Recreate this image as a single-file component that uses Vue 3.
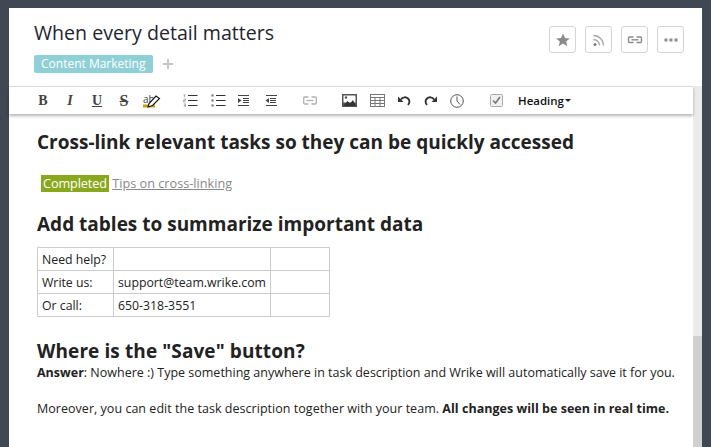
<script setup>
const rows = [
  ["Need help?", "", ""],
  ["Write us:", "support@team.wrike.com", ""],
  ["Or call:", "650-318-3551", ""],
];
</script>

<template>
  <div class="page">
    <div class="panel">
      <!-- title and action buttons -->
      <header class="head">
        <div class="head__left">
          <h1 class="title">When every detail matters</h1>
          <div class="tags">
            <span class="tag">Content Marketing</span>
            <svg class="plus" width="12" height="12" viewBox="0 0 12 12"><path d="M5 1h2v4h4v2H7v4H5V7H1V5h4z" fill="#c4c4c4" /></svg>
          </div>
        </div>
        <div class="actions">
          <button class="action">
            <svg width="16" height="16" viewBox="0 0 16 16"><path d="M8 1.500l2 4.400 4.800.5-3.600 3.200 1 4.700L8 11.500l-4.200 2.800 1-4.700L1.200 6.400 6 5.900z" fill="#8c8c8c" /></svg>
          </button>
          <button class="action">
            <svg width="14" height="14" viewBox="0 0 14 14" fill="none" stroke="#a8a8a8" stroke-width="1.300"><circle cx="3" cy="11.500" r="1.600" fill="#808080" stroke="none" /><path d="M1.500 6.500a6 6 0 0 1 6 6" /><path d="M1.500 2.500a10 10 0 0 1 10 10" /></svg>
          </button>
          <button class="action">
            <svg width="16" height="10" viewBox="0 0 16 10" fill="none" stroke="#8c8c8c" stroke-width="1.400"><path d="M6.500 2H2.500a1 1 0 0 0-1 1v3.500a1 1 0 0 0 1 1h4" /><path d="M9.500 2h4a1 1 0 0 1 1 1v3.500a1 1 0 0 1-1 1h-4" /><path d="M4.500 4.800h7" /></svg>
          </button>
          <button class="action">
            <svg width="14" height="4" viewBox="0 0 14 4"><rect x="0.500" y="0.500" width="3" height="3" fill="#8c8c8c" /><rect x="5.500" y="0.500" width="3" height="3" fill="#8c8c8c" /><rect x="10.500" y="0.500" width="3" height="3" fill="#8c8c8c" /></svg>
          </button>
        </div>
      </header>

      <div class="body">
        <div class="main">
          <!-- editor toolbar -->
          <div class="toolbar">
            <div class="tools tools--format">
              <span class="tool tool--b">B</span>
              <span class="tool tool--i">I</span>
              <span class="tool tool--u">U</span>
              <span class="tool tool--s">S</span>
              <svg class="marker" width="18" height="15" viewBox="0 0 18 15">
                <text x="0" y="10" font-size="10" font-family="Open Sans, sans-serif" fill="#444">ab</text>
                <rect x="0" y="11.500" width="12" height="3" fill="#c8a010" />
                <path d="M5 14l1-3.500L13 3l3.500 2.500-7 7z" fill="#fff" stroke="#111" stroke-width="1.100" />
              </svg>
            </div>
            <div class="tools tools--lists">
              <svg width="15" height="13" viewBox="0 0 15 13"><path d="M0.500 1h2M1.500 1v2M0.500 5h2v1.500h-2V8h2M0.500 10h2v3h-2M1 11.500h1.500" fill="none" stroke="#999" stroke-width="0.800" /><path d="M5 1.500h9.500M5 6.500h9.500M5 11.500h9.500" stroke="#333" stroke-width="1" /></svg>
              <svg width="15" height="13" viewBox="0 0 15 13"><circle cx="1.500" cy="1.500" r="1.300" fill="#888" /><circle cx="1.500" cy="6.500" r="1.300" fill="#888" /><circle cx="1.500" cy="11.500" r="1.300" fill="#888" /><path d="M5 1.500h9.500M5 6.500h9.500M5 11.500h9.500" stroke="#333" stroke-width="1" /></svg>
              <svg width="12" height="11" viewBox="0 0 12 11"><path d="M0 .5h11M5 3.500h6M5 5.500h6M5 7.500h6M0 10.500h11" stroke="#444" stroke-width="1" /><path d="M0 3l3.500 2.500L0 8z" fill="#444" /></svg>
              <svg class="outdent" width="12" height="11" viewBox="0 0 12 11"><path d="M1 .5h11M5 3.500h6M5 5.500h6M5 7.500h6M1 10.500h11" stroke="#444" stroke-width="1" /><path d="M4 3L.5 5.500 4 8z" fill="#444" /></svg>
            </div>
            <svg class="chain" width="14" height="9" viewBox="0 0 14 9" fill="none" stroke="#b0b0b0" stroke-width="1.300"><path d="M5.500 1H2a1.300 1.300 0 0 0-1.300 1.300v4.400A1.300 1.300 0 0 0 2 8h3.500" /><path d="M8.500 1H12a1.300 1.300 0 0 1 1.300 1.300v4.400A1.300 1.300 0 0 1 12 8H8.500" /><path d="M3.500 4.500h7" /></svg>
            <div class="tools tools--insert">
              <svg width="15" height="13" viewBox="0 0 15 13"><rect width="15" height="13" fill="#555" /><rect x="1.500" y="1.500" width="12" height="7" fill="#fff" /><path d="M1.500 12l4-5 2.500 2.500L11 6l3 6z" fill="#333" /><circle cx="4" cy="3.500" r="1.200" fill="#555" /></svg>
              <svg width="15" height="13" viewBox="0 0 15 13" fill="none" stroke="#777" stroke-width="1"><rect x=".5" y=".5" width="14" height="12" /><path d="M.5 3.500h14M.5 6.500h14M.5 9.500h14M5 3.500v9M10 3.500v9" /></svg>
              <svg width="13" height="12" viewBox="0 0 13 12" fill="none"><path d="M3 4.500C4.500 2 8 1.500 10 3.500c1.800 1.800 1.600 4.500 0 6.500" stroke="#333" stroke-width="1.800" /><path d="M0 1.500L5.500 7H0z" fill="#333" /></svg>
              <svg width="13" height="12" viewBox="0 0 13 12" fill="none"><path d="M10 4.500C8.500 2 5 1.500 3 3.500c-1.800 1.800-1.600 4.500 0 6.500" stroke="#333" stroke-width="1.800" /><path d="M13 1.500L7.500 7H13z" fill="#333" /></svg>
              <svg width="14" height="14" viewBox="0 0 14 14" fill="none" stroke="#555" stroke-width="1"><circle cx="7" cy="7" r="6.300" /><path d="M7 2.500V7l3 3.500" /></svg>
            </div>
            <svg class="check" width="13" height="13" viewBox="0 0 13 13" fill="none"><rect x=".5" y=".5" width="12" height="12" rx="1" fill="#f0f0f0" stroke="#aaa" /><path d="M3 6.500l2.500 2.500L10 3" stroke="#777" stroke-width="1.600" /></svg>
            <span class="heading-select">Heading<i class="caret"></i></span>
          </div>

          <!-- document -->
          <div class="doc">
            <h2 class="h first">Cross-link relevant tasks so they can be quickly accessed</h2>
            <p class="status"><span class="badge">Completed</span> <a class="link">Tips on cross-linking</a></p>
            <h2 class="h">Add tables to summarize important data</h2>
            <table class="table">
              <tbody>
                <tr v-for="row in rows" :key="row[0]">
                  <td v-for="(cell, i) in row" :key="i" :class="`c${i}`">{{ cell }}</td>
                </tr>
              </tbody>
            </table>
            <h2 class="h save">Where is the "Save" button?</h2>
            <p class="text"><b>Answer</b>: Nowhere :) Type something anywhere in task description and Wrike will automatically save it for you.</p>
            <p class="text text--gap">Moreover, you can edit the task description together with your team. <b>All changes will be seen in real time.</b></p>
          </div>
        </div>
        <div class="scrollbar"><div class="thumb"></div></div>
      </div>
    </div>
  </div>
</template>

<style scoped>
.page {
  width: 711px;
  height: 447px;
  box-sizing: border-box;
  padding: 8px 9px 0;
  background: #404853;
  overflow: hidden;
  font-family: "Open Sans", sans-serif;
  display: flex;
}
.panel {
  flex: 1;
  min-width: 0;
  background: #fff;
  display: flex;
  flex-direction: column;
}
.head {
  height: 78px;
  flex-shrink: 0;
  display: flex;
  justify-content: space-between;
  padding: 0 18px 0 25px;
}
.title {
  margin: 10px 0 0;
  font-size: 19.6px;
  line-height: 30px;
  font-weight: 400;
  color: #1f2530;
}
.tags {
  display: flex;
  align-items: center;
  gap: 9px;
  margin-top: 7px;
}
.tag {
  background: #8fd0d6;
  color: #fff;
  font-size: 12px;
  line-height: 18px;
  padding: 0 7px;
  border-radius: 2px;
}
.actions {
  display: flex;
  gap: 9px;
  padding-top: 18px;
}
.action {
  width: 27px;
  height: 27px;
  padding: 0;
  background: #fff;
  border: 1px solid #d5d5d5;
  border-radius: 3px;
  display: flex;
  align-items: center;
  justify-content: center;
}
.body {
  flex: 1;
  min-height: 0;
  display: flex;
}
.main {
  flex: 1;
  min-width: 0;
  display: flex;
  flex-direction: column;
}
.toolbar {
  height: 27px;
  flex-shrink: 0;
  border-top: 1px solid #dcdcdc;
  box-shadow: 0 2px 3px rgba(0, 0, 0, 0.3);
  display: flex;
  align-items: center;
  padding-left: 27px;
  position: relative;
}
.tools {
  display: flex;
  align-items: center;
}
.tools--format { gap: 13px; }
.marker {
  margin-left: -1px;
  overflow: visible;
}
.tools--lists {
  gap: 12.5px;
  margin-left: 22px;
}
.outdent { margin-left: 2.5px; }
.chain { margin-left: 26px; }
.tools--insert {
  gap: 13px;
  margin-left: 25px;
}
.check { margin-left: 26px; }
.tool {
  font-family: "Liberation Serif", serif;
  font-size: 14px;
  font-weight: 700;
  color: #444;
  width: 14px;
  text-align: center;
}
.tool--i { font-style: italic; }
.tool--u { text-decoration: underline; }
.tool--s { text-decoration: line-through; font-size: 16px; }
.heading-select {
  font-size: 11.5px;
  font-weight: 600;
  color: #111;
  display: flex;
  align-items: center;
  gap: 1px;
  margin-left: 15px;
}
.caret {
  width: 0;
  height: 0;
  border: 3px solid transparent;
  border-top-color: #222;
  border-bottom: 0;
}
.doc {
  flex: 1;
  padding: 0 0 0 28px;
  color: #222;
  overflow: hidden;
}
.h {
  margin: 0;
  font-size: 19px;
  line-height: 26px;
  font-weight: 700;
  color: #222;
}
.first { margin-top: 15px; }
.status {
  margin: 20px 0 0 4px;
  font-size: 12.7px;
  line-height: 17px;
}
.badge {
  background: #8aa81e;
  color: #fff;
  padding: 0 2px 0 2px;
  display: inline-block;
  letter-spacing: -0.1px;
}
.link {
  color: #888;
  text-decoration: underline;
}
.status + .h { margin-top: 19px; }
.table {
  margin-top: 10px;
  border-collapse: collapse;
  table-layout: fixed;
  width: 292px;
  font-size: 12.3px;
}
.table td {
  border: 1px solid #ccc;
  height: 23px;
  padding: 1px 4px 0;
  box-sizing: border-box;
  color: #222;
  line-height: 18px;
  white-space: nowrap;
}
.c0 { width: 76px; }
.c1 { width: 157px; }
.c2 { width: 59px; }
.save {
  margin-top: 21px;
  letter-spacing: 0.1px;
}
.text {
  margin: 0;
  font-size: 12.5px;
  line-height: 18px;
  color: #222;
  white-space: nowrap;
}
.text--gap {
  margin-top: 18px;
  letter-spacing: 0.03px;
}
.scrollbar {
  width: 9px;
  flex-shrink: 0;
  background: #ebebed;
  display: flex;
  flex-direction: column;
  justify-content: flex-end;
}
.thumb {
  height: 111px;
  background: #d0d0d0;
}
</style>
